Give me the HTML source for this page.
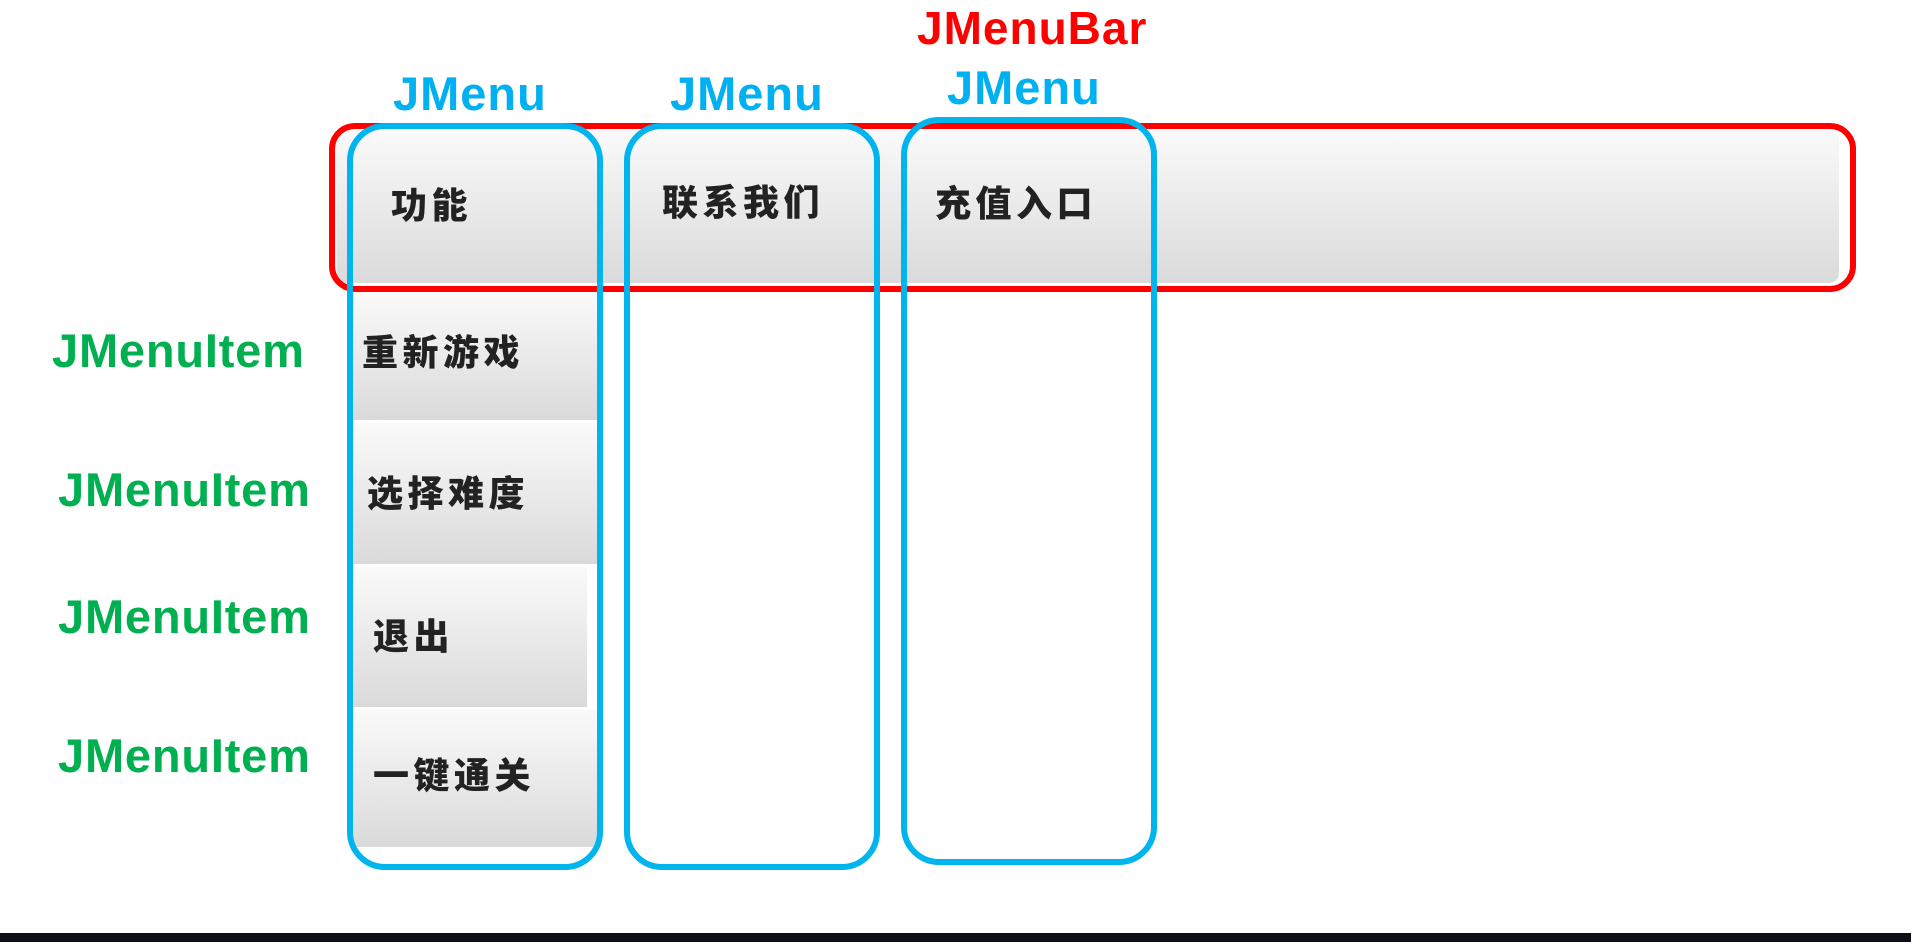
<!DOCTYPE html>
<html><head><meta charset="utf-8"><style>
body{margin:0;width:1911px;height:942px;background:#fff;position:relative;overflow:hidden;font-family:"Liberation Sans","Noto Sans CJK SC",sans-serif}
.a{position:absolute}
.g{background:linear-gradient(#fafafa,#dadada)}
.lbl{font-weight:bold;white-space:nowrap;line-height:1}
.cn{font-family:"Noto Sans CJK SC","WenQuanYi Zen Hei",sans-serif;font-weight:900;color:#222;font-size:36px;letter-spacing:4.5px;line-height:1}
.green{color:#00b050;font-size:47px;letter-spacing:0.8px}
.blue{color:#00b0f0;font-size:47px;letter-spacing:1px}
.box{border:6px solid #00b4ee;border-radius:38px;box-sizing:border-box}
</style></head><body>
<div class="a g" style="left:337px;top:130px;width:1502px;height:153px;border-radius:10px"></div>
<div class="a g" style="left:353px;top:293px;width:244px;height:127px"></div>
<div class="a g" style="left:353px;top:423px;width:244px;height:141px"></div>
<div class="a g" style="left:353px;top:567px;width:234px;height:140px"></div>
<div class="a g" style="left:353px;top:709px;width:244px;height:138px"></div>
<div class="a" style="left:329px;top:123px;width:1527px;height:169px;border:6px solid #f00;border-radius:26px;box-sizing:border-box"></div>
<div class="a box" style="left:347px;top:123px;width:256px;height:747px"></div>
<div class="a box" style="left:624px;top:123px;width:256px;height:747px"></div>
<div class="a box" style="left:901px;top:117px;width:256px;height:748px"></div>
<div class="a lbl" style="left:917px;top:5px;color:#f00;font-size:46px;letter-spacing:1px">JMenuBar</div>
<div class="a lbl blue" style="left:393px;top:70px">JMenu</div>
<div class="a lbl blue" style="left:670px;top:70px">JMenu</div>
<div class="a lbl blue" style="left:947px;top:64px">JMenu</div>
<div class="a cn" style="left:391px;top:185px">功能</div>
<div class="a cn" style="left:662px;top:182px">联系我们</div>
<div class="a cn" style="left:935px;top:183px">充值入口</div>
<div class="a cn" style="left:362px;top:332px">重新游戏</div>
<div class="a cn" style="left:367px;top:473px">选择难度</div>
<div class="a cn" style="left:373px;top:616px">退出</div>
<div class="a cn" style="left:373px;top:755px">一键通关</div>
<div class="a lbl green" style="left:52px;top:327px">JMenuItem</div>
<div class="a lbl green" style="left:58px;top:466px">JMenuItem</div>
<div class="a lbl green" style="left:58px;top:593px">JMenuItem</div>
<div class="a lbl green" style="left:58px;top:732px">JMenuItem</div>
<div class="a" style="left:0;top:933px;width:1911px;height:9px;background:#0d1117"></div>
</body></html>
